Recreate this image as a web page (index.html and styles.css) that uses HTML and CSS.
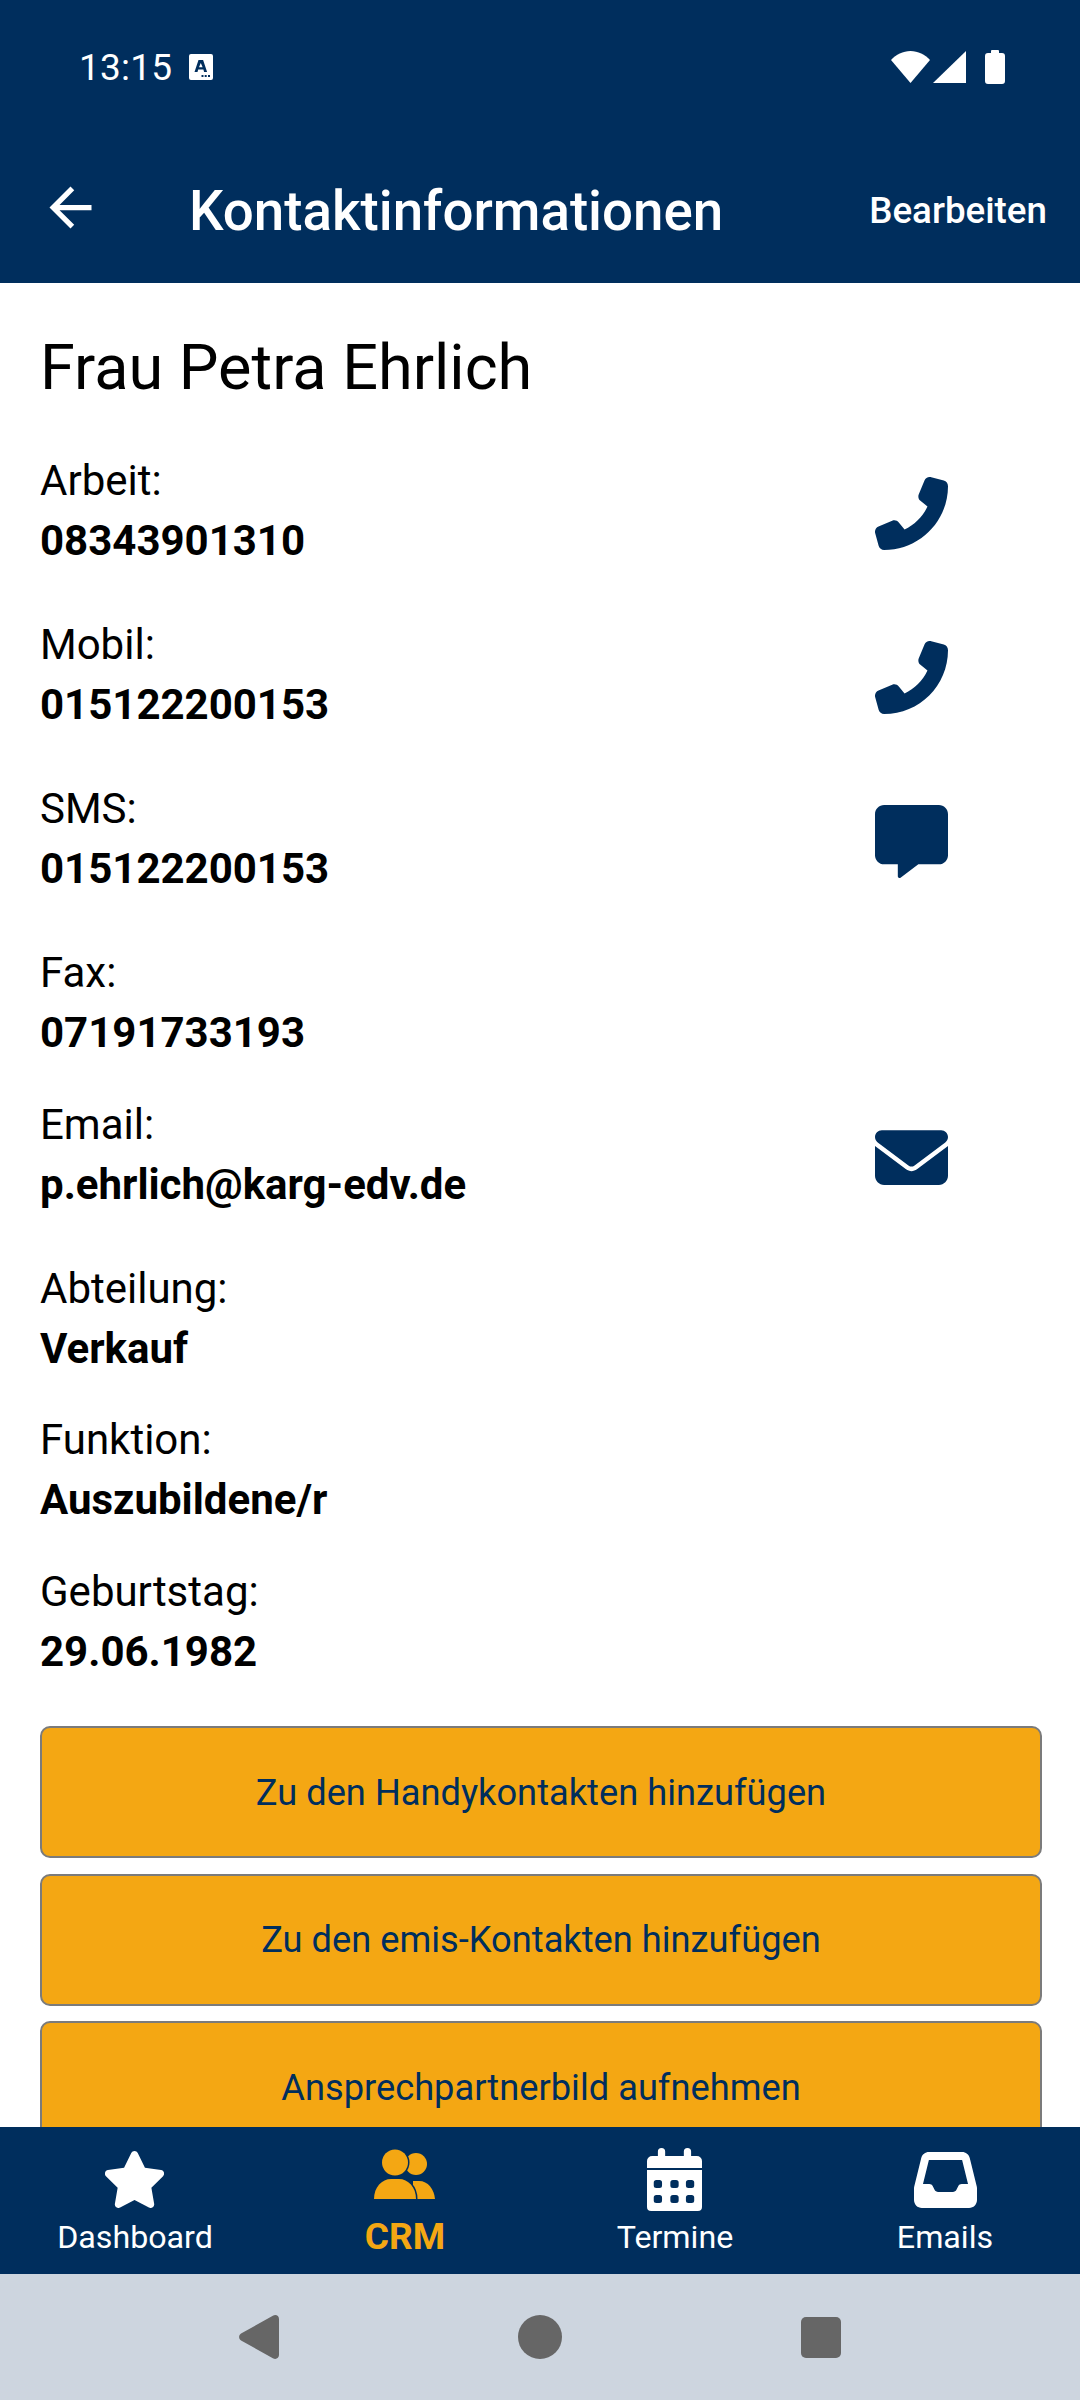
FILE: index.html
```html
<!DOCTYPE html>
<html lang="de">
<head>
    <meta charset="UTF-8">
    <meta name="viewport" content="width=device-width, initial-scale=1.0">
    <title>Kontaktinformationen</title>
    <link rel="stylesheet" href="styles.css">
</head>
<body>
    <div class="screen">
        <header class="top">
            <div class="statusbar">
                <div class="status-left">
                    <span class="clock">13:15</span>
                    <svg class="ic-a11y" viewBox="0 0 24 26">
                        <path fill="#fff" fill-rule="evenodd" d="M2 0h20a2 2 0 0 1 2 2v22a2 2 0 0 1-2 2H2a2 2 0 0 1-2-2V2a2 2 0 0 1 2-2zM9.500 6L5.500 18h3l.7-2.500h5.200l.7 2.500h3l-4-12zM11.800 9l1.800 4.300H10zM12.500 21h2v2h-2zM15.700 21h2v2h-2zM19 21h2v2h-2z"/>
                    </svg>
                </div>
                <div class="status-right">
                    <svg class="ic-wifi" viewBox="0 0 39 32"><path fill="#fff" d="M0 9C5 3.500 12 0 19.500 0S34 3.500 39 9L19.500 32z"/></svg>
                    <svg class="ic-signal" viewBox="0 0 33 32"><path fill="#fff" d="M33 0v32H0z"/></svg>
                    <svg class="ic-battery" viewBox="0 0 20 34"><path fill="#fff" d="M6 3V1a1 1 0 0 1 1-1h6a1 1 0 0 1 1 1v2h3a3 3 0 0 1 3 3v25a3 3 0 0 1-3 3H3a3 3 0 0 1-3-3V6a3 3 0 0 1 3-3z"/></svg>
                </div>
            </div>
            <div class="toolbar">
                <svg class="ic-back" viewBox="0 0 24 24"><path fill="#fff" d="M20 11H7.830l5.590-5.590L12 4l-8 8 8 8 1.410-1.410L7.830 13H20v-2z"/></svg>
                <h1 class="title">Kontaktinformationen</h1>
                <span class="edit">Bearbeiten</span>
            </div>
        </header>

        <main class="content">
            <h2 class="name">Frau Petra Ehrlich</h2>

            <div class="row has-action">
                <div><div class="label">Arbeit:</div><div class="value">08343901310</div></div>
                <svg class="ic-action" viewBox="0 0 512 512"><path transform="matrix(-1 0 0 1 512 0)" d="M164.900 24.600c-7.700-18.600-28-28.500-47.400-23.200l-88 24C12.100 30.200 0 46 0 64C0 311.400 200.600 512 448 512c18 0 33.800-12.100 38.600-29.500l24-88c5.300-19.400-4.600-39.700-23.200-47.400l-96-40c-16.300-6.800-35.200-2.100-46.300 11.600L304.700 368C234.300 334.700 177.300 277.700 144 207.300L193.300 167c13.700-11.200 18.400-30 11.600-46.300l-40-96z"/></svg>
            </div>
            <div class="row has-action">
                <div><div class="label">Mobil:</div><div class="value">015122200153</div></div>
                <svg class="ic-action" viewBox="0 0 512 512"><path transform="matrix(-1 0 0 1 512 0)" d="M164.900 24.600c-7.700-18.600-28-28.500-47.400-23.200l-88 24C12.100 30.200 0 46 0 64C0 311.400 200.600 512 448 512c18 0 33.800-12.100 38.600-29.500l24-88c5.300-19.400-4.600-39.700-23.200-47.400l-96-40c-16.300-6.800-35.200-2.100-46.300 11.600L304.700 368C234.300 334.700 177.300 277.700 144 207.300L193.300 167c13.700-11.200 18.400-30 11.600-46.300l-40-96z"/></svg>
            </div>
            <div class="row has-action">
                <div><div class="label">SMS:</div><div class="value">015122200153</div></div>
                <svg class="ic-action" viewBox="0 0 512 512"><path d="M448 0H64C28.700 0 0 28.700 0 64v288c0 35.300 28.700 64 64 64h96v84c0 9.800 11.200 15.500 19.100 9.700L304 416h144c35.300 0 64-28.700 64-64V64c0-35.300-28.700-64-64-64z"/></svg>
            </div>
            <div class="row">
                <div><div class="label">Fax:</div><div class="value">07191733193</div></div>
            </div>
            <div class="row has-action">
                <div><div class="label">Email:</div><div class="value">p.ehrlich@karg-edv.de</div></div>
                <svg class="ic-action" viewBox="0 0 512 512"><path d="M48 64C21.500 64 0 85.500 0 112c0 15.100 7.100 29.300 19.200 38.400L236.800 313.600c11.400 8.500 27 8.500 38.400 0L492.800 150.400c12.100-9.100 19.200-23.300 19.200-38.400c0-26.500-21.500-48-48-48H48zM0 176V384c0 35.300 28.700 64 64 64H448c35.300 0 64-28.700 64-64V176L294.400 339.200c-22.800 17.100-54 17.100-76.800 0L0 176z"/></svg>
            </div>
            <div class="row">
                <div><div class="label">Abteilung:</div><div class="value">Verkauf</div></div>
            </div>
            <div class="row">
                <div><div class="label">Funktion:</div><div class="value">Auszubildene/r</div></div>
            </div>
            <div class="row">
                <div><div class="label">Geburtstag:</div><div class="value">29.06.1982</div></div>
            </div>

            <div class="actions">
                <button class="btn">Zu den Handykontakten hinzufügen</button>
                <button class="btn">Zu den emis-Kontakten hinzufügen</button>
                <button class="btn">Ansprechpartnerbild aufnehmen</button>
            </div>
        </main>

        <nav class="tabs">
            <div class="tab">
                <svg class="ic-star" viewBox="25 0 526 512" preserveAspectRatio="none"><path d="M316.900 18C311.600 7 300.400 0 288.100 0s-23.400 7-28.800 18L195 150.300 51.400 171.500c-12 1.800-22 10.200-25.700 21.700s-.7 24.200 7.900 32.700L137.800 329 113.200 474.700c-2 12 3 24.200 12.900 31.300s23 8 33.800 2.300l128.300-68.500 128.300 68.500c10.800 5.700 23.900 4.900 33.800-2.300s14.900-19.300 12.900-31.300L438.500 329 542.700 225.900c8.600-8.500 11.700-21.200 7.900-32.700s-13.700-19.900-25.700-21.700L381.200 150.300 316.900 18z"/></svg>
                <span>Dashboard</span>
            </div>
            <div class="tab active">
                <svg class="ic-crm" viewBox="0 0 62 51">
                    <circle cx="43" cy="15" r="11"/>
                    <path d="M40 50V32h6c9 0 15 8 16 18z"/>
                    <circle class="cut" cx="22" cy="13.500" r="13"/>
                    <path class="cut" d="M1 50C1 38 9 30 18 30h8c9 0 17 8 17 20z"/>
                </svg>
                <span>CRM</span>
            </div>
            <div class="tab">
                <svg class="ic-cal" viewBox="0 0 53 63" preserveAspectRatio="none">
                    <path fill-rule="evenodd" d="M10.500 3.500a3.500 3.500 0 0 1 7 0V8h18V3.500a3.500 3.500 0 0 1 7 0V8H48a5 5 0 0 1 5 5v7H0v-7a5 5 0 0 1 5-5h5.500zM0 22h53v37a4 4 0 0 1-4 4H4a4 4 0 0 1-4-4zM9 32a2.500 2.500 0 0 0-2.500 2.500v3A2.500 2.500 0 0 0 9 40h3a2.500 2.500 0 0 0 2.500-2.500v-3A2.500 2.500 0 0 0 12 32zM25 32a2.500 2.500 0 0 0-2.500 2.500v3A2.500 2.500 0 0 0 25 40h3a2.500 2.500 0 0 0 2.500-2.500v-3A2.500 2.500 0 0 0 28 32zM40 32a2.500 2.500 0 0 0-2.500 2.500v3A2.500 2.500 0 0 0 40 40h3a2.500 2.500 0 0 0 2.500-2.500v-3A2.500 2.500 0 0 0 43 32zM9 47a2.500 2.500 0 0 0-2.500 2.500v3A2.500 2.500 0 0 0 9 55h3a2.500 2.500 0 0 0 2.500-2.500v-3A2.500 2.500 0 0 0 12 47zM25 47a2.500 2.500 0 0 0-2.500 2.500v3A2.500 2.500 0 0 0 25 55h3a2.500 2.500 0 0 0 2.500-2.500v-3A2.500 2.500 0 0 0 28 47zM40 47a2.500 2.500 0 0 0-2.500 2.500v3A2.500 2.500 0 0 0 40 55h3a2.500 2.500 0 0 0 2.500-2.500v-3A2.500 2.500 0 0 0 43 47z"/>
                </svg>
                <span>Termine</span>
            </div>
            <div class="tab">
                <svg class="ic-inbox" viewBox="0 32 512 448" preserveAspectRatio="none"><path d="M121 32C91.600 32 66 52 58.900 80.500L1.900 308.400C.6 313.500 0 318.700 0 323.900V416c0 35.300 28.700 64 64 64H448c35.300 0 64-28.700 64-64V323.900c0-5.200-.6-10.400-1.900-15.500l-57-227.900C446 52 420.400 32 391 32H121zm0 64H391l48 192H387.800c-12.100 0-23.200 6.800-28.600 17.700l-14.300 28.600c-5.400 10.800-16.500 17.700-28.600 17.700H195.800c-12.100 0-23.200-6.800-28.600-17.700l-14.300-28.600c-5.400-10.800-16.500-17.700-28.600-17.700H73L121 96z"/></svg>
                <span>Emails</span>
            </div>
        </nav>

        <div class="sysnav">
            <svg class="sys-back" viewBox="0 0 39 45" preserveAspectRatio="none"><path d="M2 26c-2.500-1.600-2.500-5.400 0-7L33 .8C36 -1 39 1 39 4v37c0 3-3 5-6 3.200z"/></svg>
            <div class="sys-home"></div>
            <div class="sys-recent"></div>
        </div>
    </div>
</body>
</html>
```

FILE: styles.css
```css
* {
    margin: 0;
    padding: 0;
    box-sizing: border-box;
}

body {
    background: #ffffff;
    font-family: Roboto, "Noto Sans", sans-serif;
}

.screen {
    width: 1080px;
    height: 2400px;
    display: flex;
    flex-direction: column;
    overflow: hidden;
}

/* top area */
.top {
    height: 283px;
    background: #002e5d;
    color: #ffffff;
    flex-shrink: 0;
}

.statusbar {
    height: 84px;
    padding: 50px 75px 0 79px;
    display: flex;
    justify-content: space-between;
    align-items: center;
}

.status-left,
.status-right {
    display: flex;
    align-items: center;
}

.clock {
    font-size: 37px;
    letter-spacing: 0.2px;
}

.ic-a11y {
    width: 24px;
    height: 26px;
    margin-left: 17px;
}

.ic-wifi {
    width: 39px;
    height: 32px;
}

.ic-signal {
    width: 33px;
    height: 32px;
    margin-left: 3px;
}

.ic-battery {
    width: 20px;
    height: 34px;
    margin-left: 19px;
}

.toolbar {
    height: 199px;
    padding: 54px 33px 0 40px;
    display: flex;
    align-items: center;
}

.ic-back {
    width: 63px;
    height: 63px;
    margin-top: -6px;
    margin-left: -1px;
    flex-shrink: 0;
}

.title {
    margin-left: 87px;
    font-size: 54.7px;
    font-weight: 500;
    flex: 1;
}

.edit {
    font-size: 36.75px;
    font-weight: 500;
}

/* contact details */
.content {
    flex: 1;
    min-height: 0;
    overflow: hidden;
    padding: 47px 38px 0 40px;
}

.name {
    font-size: 63px;
    font-weight: 400;
    line-height: 76px;
    color: #000000;
    margin-bottom: 45px;
}

.row {
    display: flex;
    justify-content: space-between;
    align-items: flex-start;
    min-height: 151.5px;
}

.row.has-action {
    min-height: 164px;
    padding-right: 94px;
}

.label,
.value {
    font-size: 42px;
    line-height: 60px;
    color: #000000;
}

.value {
    font-weight: 700;
}

.ic-action {
    width: 73px;
    height: 73px;
    margin-top: 26px;
    fill: #002e5d;
}

.actions {
    margin-top: 13px;
    display: flex;
    flex-direction: column;
    gap: 15.5px;
}

.btn {
    height: 132px;
    background: #f4a713;
    border: 2px solid #7b7b7b;
    border-radius: 10px;
    color: #002e5d;
    font-family: inherit;
    font-size: 36.25px;
    flex-shrink: 0;
}

/* bottom tabs */
.tabs {
    height: 147px;
    background: #002e5d;
    display: grid;
    grid-template-columns: repeat(4, 1fr);
    flex-shrink: 0;
}

.tab {
    position: relative;
    color: #ffffff;
    font-size: 32.2px;
    text-align: center;
    padding-top: 90px;
}

.tab span {
    display: block;
    line-height: 40px;
}

.tab svg {
    position: absolute;
    left: 50%;
    fill: #ffffff;
}

.tab.active {
    color: #f4a713;
    font-weight: 700;
    font-size: 37px;
}

.tab.active svg {
    fill: #f4a713;
}

.ic-star {
    width: 59px;
    height: 57px;
    top: 24px;
    margin-left: -30px;
}

.ic-crm {
    width: 62px;
    height: 51px;
    top: 22px;
    margin-left: -32px;
}

.ic-crm .cut {
    stroke: #002e5d;
    stroke-width: 3;
    paint-order: stroke;
}

.ic-cal {
    width: 55px;
    height: 63px;
    top: 21px;
    margin-left: -28px;
}

.ic-inbox {
    width: 63px;
    height: 56px;
    top: 25px;
    margin-left: -31px;
}

/* android navigation */
.sysnav {
    height: 126px;
    background: #cdd5df;
    position: relative;
    flex-shrink: 0;
}

.sysnav > * {
    position: absolute;
}

.sys-back {
    width: 40px;
    height: 44px;
    left: 239px;
    top: 41px;
    fill: #666666;
}

.sys-home {
    width: 44px;
    height: 44px;
    left: 518px;
    top: 41px;
    border-radius: 50%;
    background: #666666;
}

.sys-recent {
    width: 40px;
    height: 41px;
    left: 801px;
    top: 43px;
    border-radius: 5px;
    background: #666666;
}
```
